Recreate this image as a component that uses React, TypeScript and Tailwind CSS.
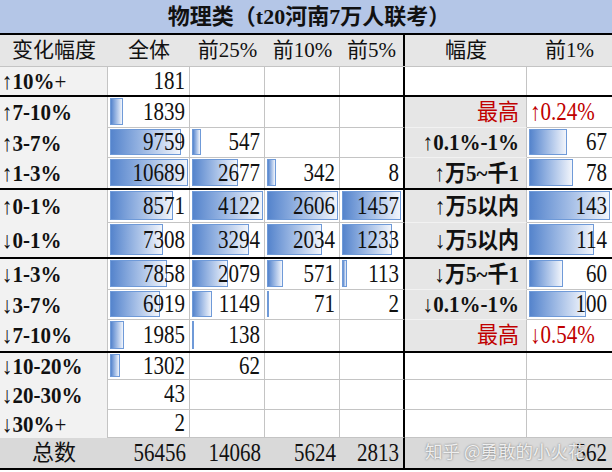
import type { ReactNode } from "react";

const FONT = "font-['Liberation_Serif','Noto_Sans_CJK_SC',serif]";
const COLS = "grid grid-cols-[108px_82px_75px_75px_65px_122px_85px]";

// widths available for data bars per column
const BAR_W = [78, 71, 71, 59];
const MAX = [10689, 4122, 2606, 1457];

type Row = {
  label: ReactNode;
  vals: (number | null)[];
  rl?: ReactNode;
  rv?: ReactNode;
  rn?: number;
  h: string;
  end?: boolean;
};

const Up = () => <span className="font-normal">↑</span>;
const Down = () => <span className="font-normal">↓</span>;

const rows: Row[] = [
  { label: <><Up />10%<span className="font-normal">+</span></>, vals: [181, null, null, null], h: "h-[30px]", end: true },
  {
    label: <><Up />7-10%</>,
    vals: [1839, null, null, null],
    rl: <span className="font-normal text-[#c00000]">最高</span>,
    rv: <span className="text-[#c00000]">↑0.24%</span>,
    h: "h-[31px]",
  },
  { label: <><Up />3-7%</>, vals: [9759, 547, null, null], rl: <><Up />0.1%-1%</>, rn: 67, h: "h-[30px]" },
  { label: <><Up />1-3%</>, vals: [10689, 2677, 342, 8], rl: <><Up />万5~千1</>, rn: 78, h: "h-[32px]", end: true },
  { label: <><Up />0-1%</>, vals: [8571, 4122, 2606, 1457], rl: <><Up />万5以内</>, rn: 143, h: "h-[33px]" },
  { label: <><Down />0-1%</>, vals: [7308, 3294, 2034, 1233], rl: <><Down />万5以内</>, rn: 114, h: "h-[36px]", end: true },
  { label: <><Down />1-3%</>, vals: [7858, 2079, 571, 113], rl: <><Down />万5~千1</>, rn: 60, h: "h-[31px]" },
  { label: <><Down />3-7%</>, vals: [6919, 1149, 71, 2], rl: <><Down />0.1%-1%</>, rn: 100, h: "h-[30px]" },
  {
    label: <><Down />7-10%</>,
    vals: [1985, 138, null, null],
    rl: <span className="font-normal text-[#c00000]">最高</span>,
    rv: <span className="text-[#c00000]">↓0.54%</span>,
    h: "h-[33px]",
    end: true,
  },
  { label: <><Down />10-20%</>, vals: [1302, 62, null, null], h: "h-[27px]" },
  { label: <><Down />20-30%</>, vals: [43, null, null, null], h: "h-[30px]" },
  { label: <><Down />30%<span className="font-normal">+</span></>, vals: [2, null, null, null], h: "h-[28px]" },
];

function Bar({ w }: { w: number }) {
  if (w < 2) return null;
  return (
    <div
      className="absolute left-[2px] top-[1px] bottom-[2px] border border-[#6f9ad8] bg-gradient-to-r from-[#5584cc] to-[#f2f5fb]"
      style={{ width: w }}
    />
  );
}

function NumCell({ v, max, bw, last, line }: { v: number | null; max: number; bw: number; last?: boolean; line: boolean }) {
  const w = v ? Math.round((v / max) * bw) : 0;
  return (
    <div
      className={`relative flex items-center justify-end bg-white pr-[4px] ${
        last ? "border-r-2 border-r-black" : "border-r border-r-[#c4c4c4]"
      } ${line ? "border-b border-b-[#c4c4c4]" : ""}`}
    >
      <Bar w={w} />
      {v !== null && <span className="relative inline-block scale-y-[1.2] text-[21px] leading-none">{v}</span>}
    </div>
  );
}

export default function App() {
  return (
    <div className={`w-[612px] h-[472px] bg-white text-[#111] ${FONT}`}>
      {/* title */}
      <div className="h-[35px] bg-[#b4c6e7] border-b-2 border-black flex items-center justify-center pl-[6px] text-[22px] font-bold">
        物理类（t20河南7万人联考）
      </div>

      {/* header */}
      <div className={`${COLS} h-[32px] bg-[#e6e6e6] border-b border-[#c4c4c4] text-[21px] leading-none`}>
        <div className="flex items-center justify-center">变化幅度</div>
        <div className="flex items-center justify-center">全体</div>
        <div className="flex items-center justify-center">前25%</div>
        <div className="flex items-center justify-center">前10%</div>
        <div className="flex items-center justify-center border-r-2 border-black">前5%</div>
        <div className="flex items-center justify-center">幅度</div>
        <div className="flex items-center justify-center">前1%</div>
      </div>

      {rows.map((r, i) => {
        const line = !r.end;
        const gray = r.rl !== undefined;
        const rw = r.rn ? Math.round((r.rn / 143) * 81) : 0;
        return (
          <div key={i} className={`${COLS} ${r.h} ${r.end ? "border-b-2 border-black" : ""}`}>
            <div className="flex items-center bg-[#f2f2f2] border-r border-r-[#c4c4c4] pl-[2px] text-[21px] font-bold leading-none">
              <span className="inline-block scale-y-[1.1]">{r.label}</span>
            </div>
            {r.vals.map((v, j) => (
              <NumCell key={j} v={v} max={MAX[j]} bw={BAR_W[j]} last={j === 3} line={line} />
            ))}
            <div
              className={`flex items-center justify-end pr-[7px] text-[21px] font-bold leading-none border-r border-r-[#c4c4c4] ${
                gray ? "bg-[#e6e6e6]" : "bg-white"
              } ${line ? (gray ? "border-b border-b-[#f2f2f2]" : "border-b border-b-[#c4c4c4]") : ""}`}
            >
              <span className="inline-block scale-y-[1.1]">{r.rl}</span>
            </div>
            <div
              className={`relative flex items-center bg-white text-[21px] leading-none ${
                r.rv ? "justify-start pl-[3px]" : "justify-end pr-[5px]"
              } ${line ? "border-b border-b-[#c4c4c4]" : ""}`}
            >
              <Bar w={rw} />
              {r.rv && <span className="inline-block scale-y-[1.2]">{r.rv}</span>}
              {r.rn !== undefined && <span className="relative inline-block scale-y-[1.2]">{r.rn}</span>}
            </div>
          </div>
        );
      })}

      {/* total */}
      <div className={`${COLS} relative h-[32px] bg-[#d9d9d9] border-b-2 border-black text-[21px] leading-none`}>
        <div className="flex items-center justify-center text-[22px]">总数</div>
        {[56456, 14068, 5624, 2813].map((v, j) => (
          <div key={j} className={`flex items-center justify-end pr-[4px] ${j === 3 ? "border-r-2 border-black" : ""}`}>
            <span className="inline-block scale-y-[1.2]">{v}</span>
          </div>
        ))}
        <div />
        <div className="flex items-center justify-end pr-[5px]">
          <span className="inline-block scale-y-[1.2]">562</span>
        </div>
        <div className="absolute left-[425px] top-[-2px] font-['Noto_Sans_CJK_SC',sans-serif] text-[17.5px] leading-[30px] text-white/85 [text-shadow:0_0_2px_rgba(0,0,0,0.55)]">
          知乎 @勇敢的小火花
        </div>
      </div>
    </div>
  );
}
